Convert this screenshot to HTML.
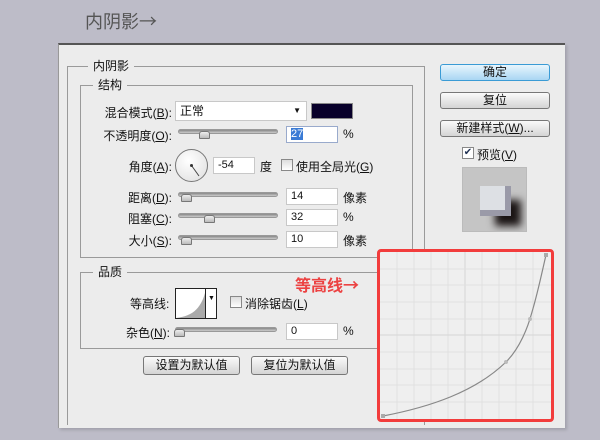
<!DOCTYPE html>
<html><head><meta charset="utf-8"><style>
*{margin:0;padding:0;box-sizing:border-box}
html,body{overflow:hidden}
body{width:600px;height:440px;background:#bdbcc8;position:relative;overflow:hidden;font-family:"Liberation Sans","Noto Sans CJK SC",sans-serif;font-size:12px;color:#111}
.a{position:absolute;white-space:nowrap}
.dlg{position:absolute;left:58px;top:43px;width:507px;height:385px;background:#ececec;border-top:2px solid #555;border-left:1px solid #999;box-shadow:2px 2px 3px rgba(0,0,0,.15);overflow:hidden}
.box{position:absolute;border:1px solid #9a9a9a}
.lbl{position:absolute;background:#ececec;padding:0 5px;line-height:14px}
.inp{position:absolute;background:#fff;border:1px solid #c8c8c8;height:17px;line-height:15px;padding-left:4px;font-size:11px}
.sl{position:absolute;height:5px;border-radius:3px;background:linear-gradient(#888,#ccc);border:1px solid #999}
.th{position:absolute;width:11px;height:8px;background:linear-gradient(#eee,#bbb);border:1px solid #777;border-radius:3px 3px 1px 1px}
.btn{position:absolute;height:17px;border:1px solid #777;border-radius:3px;background:linear-gradient(#fafafa,#d4d4d4);text-align:center;line-height:15px;font-size:12px}
.cb{position:absolute;width:12px;height:12px;border:1px solid #888;background:linear-gradient(#ddd,#fff)}
.r{text-align:right}
.cjk{font-family:"Noto Sans CJK SC",sans-serif}
</style></head><body>
<div class="a cjk" style="left:85px;top:8px;font-size:18px;color:#555">内阴影→</div>
<div class="dlg"><div class="box" style="left:8px;top:21px;width:358px;height:359px;border-bottom:none"></div></div>
<div class="lbl" style="left:88px;top:59px">内阴影</div>
<div class="box" style="left:80px;top:85px;width:333px;height:173px"></div>
<div class="lbl" style="left:93px;top:78px">结构</div>

<div class="a r" style="left:90px;width:82px;top:104px">混合模式(<u>B</u>):</div>
<div class="inp" style="left:175px;top:101px;width:132px;height:20px;font-size:12px;line-height:18px">正常<span style="position:absolute;right:5px;top:0;font-size:8px">▼</span></div>
<div class="a" style="left:311px;top:103px;width:42px;height:16px;background:#08002a;border:1px solid #888"></div>

<div class="a r" style="left:90px;width:82px;top:127px">不透明度(<u>O</u>):</div>
<div class="sl" style="left:178px;top:129px;width:100px"></div><div class="th" style="left:199px;top:131px"></div>
<div class="inp" style="left:286px;top:126px;width:52px;border-color:#9ac"><span style="background:#3a7bd5;color:#fff">27</span></div>
<div class="a" style="left:343px;top:127px">%</div>

<div class="a r" style="left:90px;width:82px;top:158px">角度(<u>A</u>):</div>
<div class="a" style="left:175px;top:149px;width:33px;height:33px;border-radius:50%;border:1px solid #777;background:radial-gradient(circle at 40% 35%,#fff,#ddd)"></div>
<svg class="a" style="left:175px;top:149px" width="33" height="33"><line x1="16.5" y1="16.5" x2="24" y2="27" stroke="#444" stroke-width="1"/><circle cx="16.5" cy="16.5" r="1.5" fill="#333"/></svg>
<div class="inp" style="left:213px;top:157px;width:42px">-54</div>
<div class="a" style="left:260px;top:158px">度</div>
<div class="cb" style="left:281px;top:159px"></div>
<div class="a" style="left:296px;top:158px">使用全局光(<u>G</u>)</div>

<div class="a r" style="left:90px;width:82px;top:189px">距离(<u>D</u>):</div>
<div class="sl" style="left:178px;top:192px;width:100px"></div><div class="th" style="left:181px;top:194px"></div>
<div class="inp" style="left:286px;top:188px;width:52px">14</div><div class="a" style="left:343px;top:189px">像素</div>

<div class="a r" style="left:90px;width:82px;top:210px">阻塞(<u>C</u>):</div>
<div class="sl" style="left:178px;top:213px;width:100px"></div><div class="th" style="left:204px;top:215px"></div>
<div class="inp" style="left:286px;top:209px;width:52px">32</div><div class="a" style="left:343px;top:210px">%</div>

<div class="a r" style="left:90px;width:82px;top:232px">大小(<u>S</u>):</div>
<div class="sl" style="left:178px;top:235px;width:100px"></div><div class="th" style="left:181px;top:237px"></div>
<div class="inp" style="left:286px;top:231px;width:52px">10</div><div class="a" style="left:343px;top:232px">像素</div>

<div class="box" style="left:80px;top:272px;width:340px;height:77px"></div>
<div class="lbl" style="left:93px;top:265px">品质</div>
<div class="a" style="left:130px;top:295px">等高线:</div>
<div class="a" style="left:175px;top:288px;width:42px;height:31px;border:1px solid #222;background:#fff"></div>
<svg class="a" style="left:176px;top:289px" width="30" height="29"><path d="M0 29 C18 27 26 18 30 0 L30 29 Z" fill="#aaa"/></svg>
<div class="a" style="left:205px;top:289px;width:1px;height:29px;background:#222"></div>
<div class="a" style="left:208px;top:295px;font-size:7px">▼</div>
<div class="cb" style="left:230px;top:296px"></div>
<div class="a" style="left:245px;top:295px">消除锯齿(<u>L</u>)</div>
<div class="a" style="left:126px;top:324px">杂色(<u>N</u>):</div>
<div class="sl" style="left:175px;top:327px;width:102px"></div><div class="th" style="left:174px;top:329px"></div>
<div class="inp" style="left:286px;top:323px;width:52px">0</div><div class="a" style="left:343px;top:324px">%</div>

<div class="btn" style="left:143px;top:356px;width:97px;height:19px;line-height:17px">设置为默认值</div>
<div class="btn" style="left:251px;top:356px;width:97px;height:19px;line-height:17px">复位为默认值</div>

<div class="btn" style="left:440px;top:64px;width:110px;border-color:#3a9bd5;background:linear-gradient(#e8f5fd,#a9d6f3)">确定</div>
<div class="btn" style="left:440px;top:92px;width:110px">复位</div>
<div class="btn" style="left:440px;top:120px;width:110px">新建样式(<u>W</u>)...</div>
<div class="cb" style="left:462px;top:147px;background:#fff;color:#235;font-size:10px;line-height:10px;text-align:center">✔</div>
<div class="a" style="left:477px;top:146px">预览(<u>V</u>)</div>
<div class="a" style="left:462px;top:167px;width:65px;height:65px;background:#c5c5c5;border:1px solid #bbb;overflow:hidden">
<div class="a" style="left:32px;top:32px;width:26px;height:26px;background:#1a1414;filter:blur(4px)"></div>
<div class="a" style="left:17px;top:18px;width:31px;height:30px;background:#9a9aa8"></div>
<div class="a" style="left:17px;top:18px;width:25px;height:24px;background:#dde0e4"></div>
</div>

<div class="a cjk" style="left:295px;top:272px;font-size:16px;font-weight:bold;color:#ec4242">等高线→</div>
<div class="a" style="left:377px;top:249px;width:177px;height:173px;border:3px solid #f23c3c;border-radius:4px;background:#efefef"></div>
<svg class="a" style="left:380px;top:252px" width="171" height="167">
<g stroke="#e0e0e0" stroke-width="1">
<line x1="17" y1="0" x2="17" y2="167"/><line x1="34" y1="0" x2="34" y2="167"/><line x1="51" y1="0" x2="51" y2="167"/><line x1="68" y1="0" x2="68" y2="167"/><line x1="85" y1="0" x2="85" y2="167" stroke="#d6d6d6"/><line x1="102" y1="0" x2="102" y2="167"/><line x1="119" y1="0" x2="119" y2="167"/><line x1="136" y1="0" x2="136" y2="167"/><line x1="153" y1="0" x2="153" y2="167"/>
<line y1="17" x1="0" y2="17" x2="171"/><line y1="33" x1="0" y2="33" x2="171"/><line y1="50" x1="0" y2="50" x2="171"/><line y1="67" x1="0" y2="67" x2="171"/><line y1="83" x1="0" y2="83" x2="171" stroke="#d6d6d6"/><line y1="100" x1="0" y2="100" x2="171"/><line y1="117" x1="0" y2="117" x2="171"/><line y1="133" x1="0" y2="133" x2="171"/><line y1="150" x1="0" y2="150" x2="171"/>
</g>
<path d="M3 164 C50 155 95 140 126 110 C140 96 148 75 152 60 C158 40 162 20 166 3" fill="none" stroke="#888" stroke-width="1.2"/>
<rect x="1" y="162" width="4" height="4" fill="#aaa"/><rect x="164" y="1" width="4" height="4" fill="#aaa"/>
<circle cx="126" cy="110" r="2" fill="#bbb"/><circle cx="150" cy="67" r="2" fill="#bbb"/>
</svg>
</body></html>
